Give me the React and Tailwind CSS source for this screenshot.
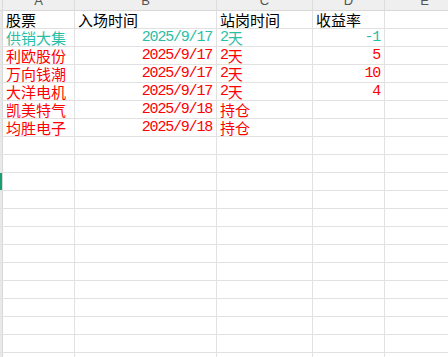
import React from "react";

const CJK = { fontFamily: '"Noto Sans CJK SC", "Noto Sans", sans-serif' };

const TEAL = "text-[#2bbea6]";
const RED = "text-[#ff0000]";

const rows = [
  { name: "供销大集", date: "2025/9/17", days: "2天", rate: "-1", color: TEAL },
  { name: "利欧股份", date: "2025/9/17", days: "2天", rate: "5", color: RED },
  { name: "万向钱潮", date: "2025/9/17", days: "2天", rate: "10", color: RED },
  { name: "大洋电机", date: "2025/9/17", days: "2天", rate: "4", color: RED },
  { name: "凯美特气", date: "2025/9/18", days: "持仓", rate: "", color: RED },
  { name: "均胜电子", date: "2025/9/18", days: "持仓", rate: "", color: RED },
];

// digits in a half-width mono face, the rest in the CJK face
const Mixed = ({ text }) => {
  const parts = text.split(/([0-9/\-]+)/).filter(Boolean);
  return parts.map((p, i) =>
    /^[0-9/\-]+$/.test(p) ? (
      <span
        key={i}
        className="font-['Liberation_Mono',monospace] text-[15px] tracking-[-1.2px]"
      >
        {p}
      </span>
    ) : (
      <span key={i}>{p}</span>
    )
  );
};

const Cell = ({ w, children, right, className = "" }) => (
  <div
    className={`${w} shrink-0 h-full border-r border-[#e1e1e1] flex items-end overflow-hidden whitespace-nowrap ${
      right ? "justify-end pr-[4px]" : "pl-[3px]"
    } ${className}`}
  >
    {children}
  </div>
);

const widths = ["w-[72px]", "w-[142px]", "w-[96px]", "w-[72px]", "w-[80px]"];

export default function App() {
  const empty = Array.from({ length: 14 });

  return (
    <div
      className="w-[448px] h-[357px] overflow-hidden bg-white text-[15px] leading-[17px] text-black"
      style={CJK}
    >
      {/* column letters, scrolled so only their feet show */}
      <div className="flex h-[11px] bg-[#efefef] border-b border-[#d8d8d8]">
        <div className="w-[3px] shrink-0 border-r border-[#d8d8d8]" />
        {["A", "B", "C", "D", "E"].map((l, i) => (
          <div
            key={l}
            className={`${widths[i]} shrink-0 border-r border-[#dcdcdc] flex justify-center overflow-hidden`}
          >
            <span className="block font-['Liberation_Sans',sans-serif] text-[13px] leading-none mt-[-6px] text-[#555]">
              {l}
            </span>
          </div>
        ))}
      </div>

      {/* header row */}
      <div className="flex h-[18px] border-b border-[#e1e1e1]">
        <div className="w-[3px] shrink-0 bg-[#e9e9e9] border-r border-[#d8d8d8]" />
        <Cell w={widths[0]}>股票</Cell>
        <Cell w={widths[1]}>入场时间</Cell>
        <Cell w={widths[2]}>站岗时间</Cell>
        <Cell w={widths[3]}>收益率</Cell>
        <Cell w={widths[4]} />
      </div>

      {rows.map((r) => (
        <div key={r.name} className={`flex h-[18px] border-b border-[#e1e1e1] ${r.color}`}>
          <div className="w-[3px] shrink-0 bg-[#e9e9e9] border-r border-[#d8d8d8]" />
          <Cell w={widths[0]}>{r.name}</Cell>
          <Cell w={widths[1]} right>
            <Mixed text={r.date} />
          </Cell>
          <Cell w={widths[2]}>
            <Mixed text={r.days} />
          </Cell>
          <Cell w={widths[3]} right>
            <Mixed text={r.rate} />
          </Cell>
          <Cell w={widths[4]} />
        </div>
      ))}

      {empty.map((_, i) => (
        <div key={i} className="flex h-[18px] border-b border-[#e1e1e1]">
          <div
            className={`w-[3px] shrink-0 border-r border-[#d8d8d8] ${
              i === 2 ? "bg-[#17a06e]" : "bg-[#e9e9e9]"
            }`}
          />
          {widths.map((w) => (
            <Cell key={w} w={w} />
          ))}
        </div>
      ))}
    </div>
  );
}
